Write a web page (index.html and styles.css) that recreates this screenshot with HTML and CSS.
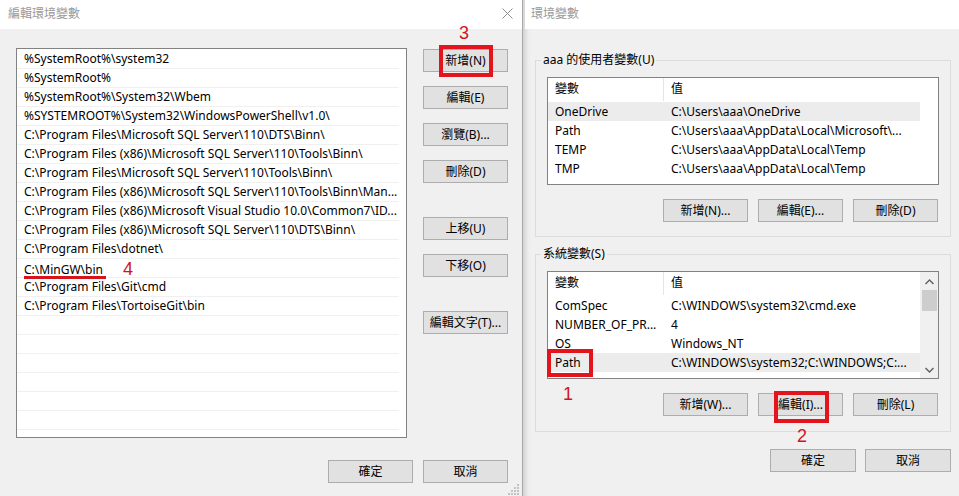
FILE: index.html
```html
<!DOCTYPE html>
<html lang="zh-Hant">

<head>
  <meta charset="UTF-8">
  <meta name="viewport" content="width=device-width, initial-scale=1.0">
  <title>環境變數</title>
  <link rel="stylesheet" href="styles.css">
</head>

<body>
  <div class="desktop">
    <div class="window window--edit">
      <div class="titlebar">
        <span class="titlebar__text">編輯環境變數</span>
        <svg class="titlebar__close" width="11" height="11" viewBox="0 0 11 11">
          <path d="M0.5 0.5 L10.5 10.5 M10.5 0.5 L0.5 10.5" stroke="#8c8c8c" stroke-width="1" fill="none" />
        </svg>
      </div>
      <div class="edit">
        <div class="edit__main">
          <ul class="pathlist">
            <li class="pathlist__item">%SystemRoot%\system32</li>
            <li class="pathlist__item">%SystemRoot%</li>
            <li class="pathlist__item">%SystemRoot%\System32\Wbem</li>
            <li class="pathlist__item">%SYSTEMROOT%\System32\WindowsPowerShell\v1.0\</li>
            <li class="pathlist__item">C:\Program Files\Microsoft SQL Server\110\DTS\Binn\</li>
            <li class="pathlist__item">C:\Program Files (x86)\Microsoft SQL Server\110\Tools\Binn\</li>
            <li class="pathlist__item">C:\Program Files\Microsoft SQL Server\110\Tools\Binn\</li>
            <li class="pathlist__item">C:\Program Files (x86)\Microsoft SQL Server\110\Tools\Binn\Man...</li>
            <li class="pathlist__item">C:\Program Files (x86)\Microsoft Visual Studio 10.0\Common7\ID...</li>
            <li class="pathlist__item">C:\Program Files (x86)\Microsoft SQL Server\110\DTS\Binn\</li>
            <li class="pathlist__item">C:\Program Files\dotnet\</li>
            <li class="pathlist__item pathlist__item--marked"><span class="underlined">C:\MinGW\bin</span><span class="mark-num mark-num--inline">4</span></li>
            <li class="pathlist__item">C:\Program Files\Git\cmd</li>
            <li class="pathlist__item">C:\Program Files\TortoiseGit\bin</li>
            <li class="pathlist__item"></li>
            <li class="pathlist__item"></li>
            <li class="pathlist__item"></li>
            <li class="pathlist__item"></li>
            <li class="pathlist__item"></li>
            <li class="pathlist__item"></li>
            <li class="pathlist__item"></li>
          </ul>
          <div class="edit__buttons">
            <button class="btn">新增(N)</button>
            <button class="btn">編輯(E)</button>
            <button class="btn">瀏覽(B)...</button>
            <button class="btn">刪除(D)</button>
            <button class="btn btn--gap">上移(U)</button>
            <button class="btn">下移(O)</button>
            <button class="btn btn--gap">編輯文字(T)...</button>
          </div>
        </div>
        <div class="footer">
          <button class="btn">確定</button>
          <button class="btn">取消</button>
        </div>
      </div>
      <svg class="grip" width="12" height="12" viewBox="0 0 12 12">
        <rect x="9" y="1" width="2" height="2" fill="#c4c4c4" />
        <rect x="6" y="4" width="2" height="2" fill="#c4c4c4" />
        <rect x="9" y="4" width="2" height="2" fill="#c4c4c4" />
        <rect x="3" y="7" width="2" height="2" fill="#c4c4c4" />
        <rect x="6" y="7" width="2" height="2" fill="#c4c4c4" />
        <rect x="9" y="7" width="2" height="2" fill="#c4c4c4" />
        <rect x="0" y="10" width="2" height="2" fill="#c4c4c4" />
        <rect x="3" y="10" width="2" height="2" fill="#c4c4c4" />
        <rect x="6" y="10" width="2" height="2" fill="#c4c4c4" />
        <rect x="9" y="10" width="2" height="2" fill="#c4c4c4" />
      </svg>
    </div>

    <div class="window window--env">
      <div class="titlebar titlebar--env">
        <span class="titlebar__text">環境變數</span>
      </div>
      <div class="env">
        <fieldset class="group">
          <legend class="group__label">aaa 的使用者變數(U)</legend>
          <div class="varlist">
            <div class="varlist__table">
              <div class="varlist__head">
                <span class="varlist__cell varlist__cell--name">變數</span>
                <span class="varlist__cell">值</span>
              </div>
              <div class="varlist__row varlist__row--selected">
                <span class="varlist__cell varlist__cell--name">OneDrive</span>
                <span class="varlist__cell">C:\Users\aaa\OneDrive</span>
              </div>
              <div class="varlist__row">
                <span class="varlist__cell varlist__cell--name">Path</span>
                <span class="varlist__cell">C:\Users\aaa\AppData\Local\Microsoft\...</span>
              </div>
              <div class="varlist__row">
                <span class="varlist__cell varlist__cell--name">TEMP</span>
                <span class="varlist__cell">C:\Users\aaa\AppData\Local\Temp</span>
              </div>
              <div class="varlist__row">
                <span class="varlist__cell varlist__cell--name">TMP</span>
                <span class="varlist__cell">C:\Users\aaa\AppData\Local\Temp</span>
              </div>
            </div>
            <div class="varlist__side"></div>
          </div>
          <div class="group__buttons">
            <button class="btn">新增(N)...</button>
            <button class="btn">編輯(E)...</button>
            <button class="btn">刪除(D)</button>
          </div>
        </fieldset>

        <fieldset class="group group--system">
          <legend class="group__label">系統變數(S)</legend>
          <div class="varlist">
            <div class="varlist__table">
              <div class="varlist__head">
                <span class="varlist__cell varlist__cell--name">變數</span>
                <span class="varlist__cell">值</span>
              </div>
              <div class="varlist__row">
                <span class="varlist__cell varlist__cell--name">ComSpec</span>
                <span class="varlist__cell">C:\WINDOWS\system32\cmd.exe</span>
              </div>
              <div class="varlist__row">
                <span class="varlist__cell varlist__cell--name">NUMBER_OF_PR...</span>
                <span class="varlist__cell">4</span>
              </div>
              <div class="varlist__row">
                <span class="varlist__cell varlist__cell--name">OS</span>
                <span class="varlist__cell">Windows_NT</span>
              </div>
              <div class="varlist__row varlist__row--selected">
                <span class="varlist__cell varlist__cell--name">Path</span>
                <span class="varlist__cell">C:\WINDOWS\system32;C:\WINDOWS;C:...</span>
              </div>
            </div>
            <div class="varlist__side scrollbar">
              <svg class="scrollbar__arrow" width="9" height="6" viewBox="0 0 9 6">
                <path d="M0.5 5 L4.5 1 L8.5 5" stroke="#606060" stroke-width="1.4" fill="none" />
              </svg>
              <div class="scrollbar__thumb"></div>
              <div class="scrollbar__track"></div>
              <svg class="scrollbar__arrow" width="9" height="6" viewBox="0 0 9 6">
                <path d="M0.5 1 L4.5 5 L8.5 1" stroke="#606060" stroke-width="1.4" fill="none" />
              </svg>
            </div>
          </div>
          <div class="group__buttons">
            <button class="btn">新增(W)...</button>
            <button class="btn">編輯(I)...</button>
            <button class="btn">刪除(L)</button>
          </div>
        </fieldset>

        <div class="footer footer--env">
          <button class="btn btn--wide">確定</button>
          <button class="btn btn--wide">取消</button>
        </div>
      </div>
    </div>

    <!-- red annotations drawn over the screenshot -->
    <div class="mark-box mark-box--new"></div>
    <div class="mark-box mark-box--path"></div>
    <div class="mark-box mark-box--edit"></div>
    <span class="mark-num mark-num--1">1</span>
    <span class="mark-num mark-num--2">2</span>
    <span class="mark-num mark-num--3">3</span>
  </div>
</body>

</html>
```

FILE: styles.css
```css
html,
body {
  margin: 0;
  padding: 0;
  overflow: hidden;
}

body {
  font-family: "Noto Sans", "Noto Sans CJK TC", sans-serif;
  font-size: 12px;
  color: #000;
  background: #f0f0f0;
}

.desktop {
  position: relative;
  display: flex;
  width: 961px;
  height: 496px;
}

.window {
  position: relative;
  display: flex;
  flex-direction: column;
  background: #f0f0f0;
}

.window--edit {
  width: 522px;
  flex-shrink: 0;
}

.window--env {
  width: 438px;
  flex-shrink: 0;
  border-left: 1px solid #a9a9a9;
  background: linear-gradient(to right, #d2d2d2 0, #ececec 5px, #f0f0f0 8px);
}

.titlebar {
  height: 29px;
  flex-shrink: 0;
  display: flex;
  align-items: center;
  justify-content: space-between;
  padding: 0 9px 0 8px;
  background: #fff;
}

.titlebar--env {
  padding-left: 6px;
  border-left: 2px solid #d8d8d8;
}

.titlebar__text {
  color: #999;
  font-size: 12px;
  line-height: 16px;
  margin-top: -1px;
}

.titlebar__close {
  display: block;
  margin-top: -2px;
}

/* buttons */
.btn {
  width: 85px;
  height: 23px;
  padding: 0;
  border: 1px solid #adadad;
  background: #e1e1e1;
  font-family: inherit;
  font-size: 12px;
  color: #000;
  line-height: 21px;
  text-align: center;
  white-space: nowrap;
}

.btn--wide {
  width: 86px;
}

/* left window */
.edit {
  flex: 1;
  display: flex;
  flex-direction: column;
  padding: 19px 14px 0 16px;
}

.edit__main {
  display: flex;
}

.pathlist {
  width: 392px;
  height: 390px;
  box-sizing: border-box;
  margin: 0;
  padding: 1px 7px 0 0;
  list-style: none;
  background: #fff;
  border: 1px solid #828282;
  overflow: hidden;
}

.pathlist__item {
  height: 19px;
  box-sizing: border-box;
  padding-left: 7px;
  border-bottom: 1px solid #f0f0f0;
  line-height: 18px;
  white-space: nowrap;
  overflow: hidden;
}

.pathlist__item--marked {
  position: relative;
  overflow: visible;
}

.underlined {
  position: relative;
  display: inline-block;
  line-height: 18px;
}

.underlined::after {
  content: "";
  position: absolute;
  z-index: 1;
  left: 0;
  right: -3px;
  bottom: 0;
  height: 3px;
  background: #d7141c;
}

.edit__buttons {
  display: flex;
  flex-direction: column;
  gap: 14px;
  margin-left: 16px;
  padding-top: 1px;
}

.btn--gap {
  margin-top: 20px;
}

.footer {
  display: flex;
  justify-content: flex-end;
  gap: 10px;
  margin-top: 22px;
}

.grip {
  position: absolute;
  right: 2px;
  bottom: 1px;
}

/* right window */
.env {
  flex: 1;
  display: flex;
  flex-direction: column;
  padding: 23px 10px 0 12px;
}

.group {
  margin: 0;
  min-width: 0;
  padding: 0 12px 14px 11px;
  border: 1px solid #dcdcdc;
}

.group--system {
  margin-top: 9px;
  padding-bottom: 15px;
}

.group__label {
  margin-left: -6px;
  padding: 0 2px;
  line-height: 16px;
}

.varlist {
  display: flex;
  height: 108px;
  box-sizing: border-box;
  margin-top: 9px;
  margin-right: -1px;
  border: 1px solid #828282;
  background: #fff;
}

.varlist__table {
  width: 372px;
}

.varlist__head,
.varlist__row {
  display: grid;
  grid-template-columns: 116px 256px;
  white-space: nowrap;
}

.varlist__head {
  height: 24px;
  line-height: 22px;
}

.varlist__head .varlist__cell--name {
  border-right: 1px solid #e5e5e5;
}

.varlist__head .varlist__cell {
  height: 23px;
}

.varlist__row {
  height: 19px;
  line-height: 19px;
}

.varlist__row--selected {
  background: #ececec;
}

.varlist__cell {
  padding-left: 7px;
  overflow: hidden;
}

.varlist__side {
  flex: 1;
}

.scrollbar {
  display: flex;
  flex-direction: column;
  align-items: center;
  background: #f0f0f0;
}

.scrollbar__arrow {
  display: block;
  margin: 7px 0 5px;
}

.scrollbar__thumb {
  width: 15px;
  height: 21px;
  background: #cdcdcd;
}

.scrollbar__track {
  flex: 1;
}

.group__buttons {
  display: flex;
  justify-content: flex-end;
  gap: 10px;
  margin-top: 14px;
}

.footer--env {
  margin-top: 17px;
  gap: 9px;
}

/* annotations */
.mark-box {
  position: absolute;
  box-sizing: border-box;
  border: 4px solid #e3141b;
}

.mark-box--new {
  left: 439px;
  top: 45px;
  width: 54px;
  height: 32px;
}

.mark-box--path {
  left: 547px;
  top: 349px;
  width: 46px;
  height: 28px;
}

.mark-box--edit {
  left: 774px;
  top: 391px;
  width: 55px;
  height: 32px;
}

.mark-num {
  position: absolute;
  font-family: "Liberation Sans", Arial, sans-serif;
  font-size: 18px;
  line-height: 18px;
  color: #d0141c;
}

.mark-num--inline {
  position: relative;
  margin-left: 20px;
  top: 1px;
}

.mark-num--1 {
  left: 563px;
  top: 385px;
}

.mark-num--2 {
  left: 797px;
  top: 427px;
}

.mark-num--3 {
  left: 459px;
  top: 24px;
}
```
